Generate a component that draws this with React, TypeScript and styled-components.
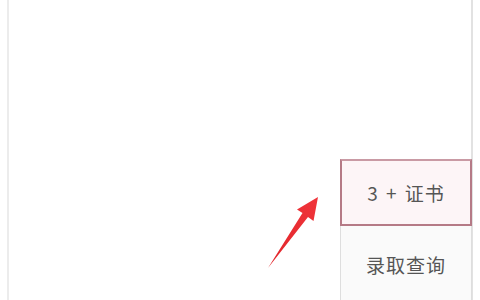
import React from "react";
import styled, { createGlobalStyle } from "styled-components";

const GlobalStyle = createGlobalStyle`
  html, body {
    margin: 0;
    padding: 0;
    background: #ffffff;
    font-family: "Noto Sans CJK SC", "Liberation Sans", sans-serif;
  }
`;

const Page = styled.div`
  position: relative;
  width: 480px;
  height: 300px;
  overflow: hidden;
  background: #ffffff;
`;

const Frame = styled.div`
  margin: 0 7px 0 7px;
  height: 300px;
  border-left: 2px solid #ececec;
  border-right: 2px solid #e2e2e2;
  box-sizing: border-box;
  display: flex;
  justify-content: flex-end;
  align-items: flex-start;
`;

const Menu = styled.div`
  margin-top: 159px;
  margin-right: -1px;
  width: 132px;
  display: flex;
  flex-direction: column;
`;

const MenuItem = styled.div<{ $active?: boolean }>`
  box-sizing: border-box;
  height: ${({ $active }) => ($active ? "67px" : "80px")};
  display: flex;
  align-items: center;
  justify-content: center;
  padding-bottom: ${({ $active }) => ($active ? "0" : "2px")};
  font-size: 19px;
  letter-spacing: 1px;
  color: #555555;
  background: ${({ $active }) => ($active ? "#fdf5f7" : "#fafafa")};
  border: ${({ $active }) =>
    $active ? "2px solid #b57a86" : "1px solid #dedede"};
  border-top: ${({ $active }) => ($active ? "2px solid #c99aa4" : "none")};
  word-spacing: 2px;
`;

const Arrow = styled.svg`
  position: absolute;
  left: 262px;
  top: 190px;
  width: 64px;
  height: 84px;
`;

export default function App() {
  return (
    <>
      <GlobalStyle />
      <Page>
        <Frame>
          <Menu>
            <MenuItem $active>3 + 证书</MenuItem>
            <MenuItem>录取查询</MenuItem>
          </Menu>
        </Frame>
        <Arrow viewBox="262 190 64 84">
          <defs>
            <linearGradient id="ar" x1="0" y1="1" x2="1" y2="0">
              <stop offset="0" stopColor="#e1262b" />
              <stop offset="1" stopColor="#f0343a" />
            </linearGradient>
          </defs>
          <polygon
            points="318,197 313.5,221 308,217 268,268 302.5,213 297,209.5"
            fill="url(#ar)"
          />
        </Arrow>
      </Page>
    </>
  );
}
